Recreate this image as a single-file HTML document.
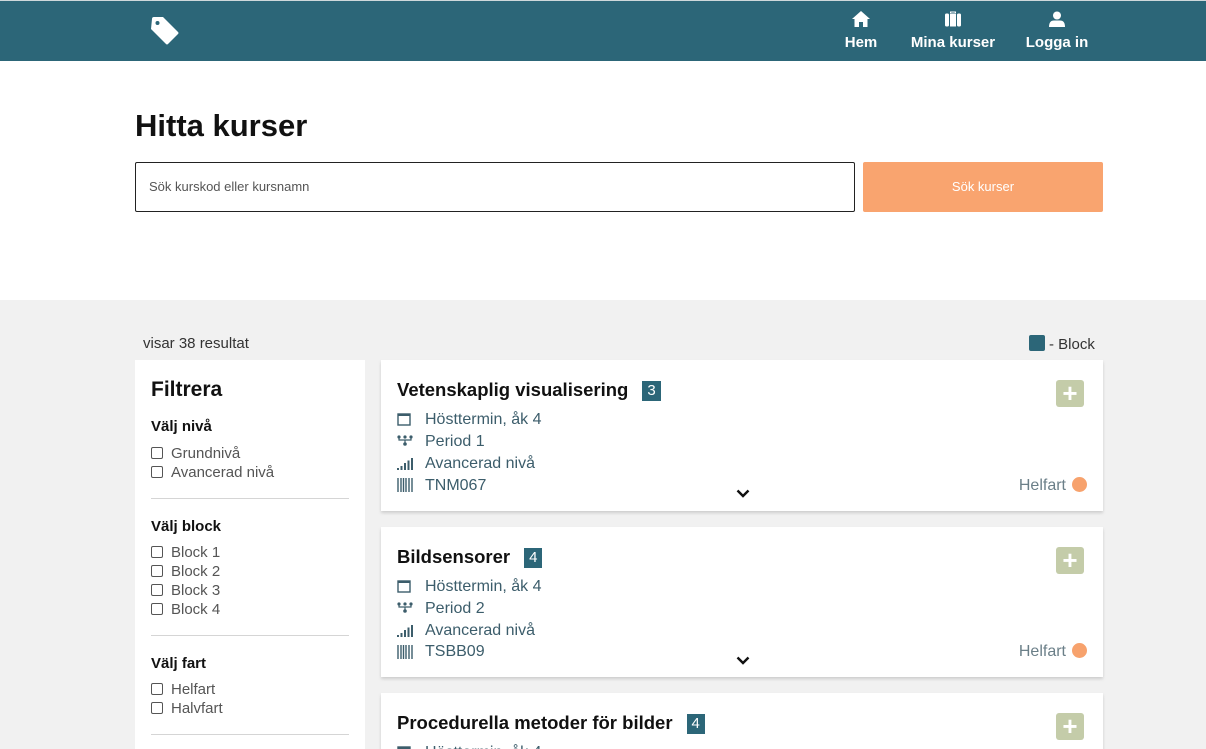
<!DOCTYPE html><html><head><meta charset="utf-8"><style>
*{margin:0;padding:0;box-sizing:border-box}
html,body{width:1206px;height:749px;overflow:hidden}
body{background:#f1f1f1;font-family:"Liberation Sans",sans-serif;position:relative}
.a{position:absolute}
.hdr{left:0;top:0;width:1206px;height:61px;background:#2c6678;border-top:1px solid #cfd8db}
.nav{color:#fff;font-weight:bold;font-size:15px;text-align:center;white-space:nowrap}
.white{left:0;top:61px;width:1206px;height:239px;background:#fff}
h1{font-size:31px;font-weight:bold;color:#111}
.inp{left:135px;top:162px;width:720px;height:50px;border:1px solid #222;border-radius:2px;background:#fff;font-size:13px;color:#555;padding:16px 13px}
.btn{left:863px;top:162px;width:240px;height:50px;background:#f9a46f;color:#fff;font-size:13px;text-align:center;line-height:50px;border-radius:2px}
.side{left:135px;top:360px;width:230px;height:400px;background:#fff}
.card{left:381px;width:722px;background:#fff;box-shadow:0 2px 3px rgba(0,0,0,.15)}
.t{font-size:18.5px;font-weight:bold;color:#111;position:absolute;left:16px;top:19px;white-space:nowrap}
.badge{display:inline-block;background:#2c6678;color:#fff;font-size:15px;font-weight:normal;padding:0 5px;height:20px;line-height:20px;margin-left:14px;vertical-align:1px}
.m{position:absolute;left:44px;font-size:16px;color:#3c5d6b}
.ic{position:absolute;left:16px}
.plus{position:absolute;right:19px;top:20px;width:28px;height:27px;background:#c4cca9;border-radius:3px;color:#fff;font-size:26px;line-height:27px;text-align:center;font-weight:bold}
.hf{position:absolute;right:16px;font-size:16px;color:#6b7f88}
.dot{display:inline-block;width:15px;height:15px;border-radius:50%;background:#f7a26d;margin-left:6px;vertical-align:-2px}
.chev{position:absolute;left:355px}
.fh{font-size:15px;font-weight:bold;color:#111;position:absolute;left:16px}
.cb{position:absolute;left:16px;font-size:15px;color:#555}
.cb i{display:inline-block;width:12px;height:12px;border:1px solid #555;border-radius:2px;margin-right:8px;vertical-align:-1px}
.hr{position:absolute;left:16px;width:198px;height:1px;background:#d5d5d5}
</style></head><body>
<div class="a hdr">
<svg class="a" style="left:150px;top:15px" width="30" height="30" viewBox="0 0 30 30"><path d="M2 3 Q2 1 4 1 L13 1 L28 16 Q29 17 28 18 L18 28 Q17 29 16 28 L1 13 Z" fill="#fff"/><circle cx="7.5" cy="7" r="2" fill="#2c6678"/></svg>
<div class="a nav" style="left:843px;top:10px;width:36px"><svg width="18" height="16" viewBox="0 0 18 16"><path d="M9 0 L18 8 L15.5 8 L15.5 16 L11 16 L11 11 L7 11 L7 16 L2.5 16 L2.5 8 L0 8Z" fill="#fff"/></svg><div style="margin-top:3px">Hem</div></div>
<div class="a nav" style="left:908px;top:10px;width:90px"><svg width="16" height="16" viewBox="0 0 16 16"><path d="M5 2 L5 0.5 L11 0.5 L11 2 L9.8 2 L9.8 1.5 L6.2 1.5 L6.2 2Z" fill="#fff"/><rect x="0" y="2.5" width="4" height="13" rx="1.5" fill="#fff"/><rect x="5" y="2.5" width="6" height="13" fill="#fff"/><rect x="12" y="2.5" width="4" height="13" rx="1.5" fill="#fff"/></svg><div style="margin-top:3px">Mina kurser</div></div>
<div class="a nav" style="left:1022px;top:10px;width:70px"><svg width="16" height="16" viewBox="0 0 16 16"><circle cx="8" cy="4.5" r="4" fill="#fff"/><path d="M0 16 Q0 9.5 5 9.5 L11 9.5 Q16 9.5 16 16Z" fill="#fff"/></svg><div style="margin-top:3px">Logga in</div></div>
</div>
<div class="a white"></div>
<h1 class="a" style="left:135px;top:108px">Hitta kurser</h1>
<div class="a inp">Sök kurskod eller kursnamn</div>
<div class="a btn">Sök kurser</div>
<div class="a" style="left:143px;top:335px;font-size:15px;color:#333">visar 38 resultat</div>
<div class="a" style="left:1029px;top:335px;font-size:15px;color:#333"><span style="display:inline-block;width:16px;height:16px;background:#2c6678;border-radius:2px;vertical-align:-2px;margin-right:4px"></span>- Block</div>
<div class="a side">
<div class="a" style="left:16px;top:18px;font-size:21px;font-weight:bold;color:#111">Filtrera</div>
<div class="fh" style="top:58px">Välj nivå</div>
<div class="cb" style="top:85px"><i></i>Grundnivå</div>
<div class="cb" style="top:104px"><i></i>Avancerad nivå</div>
<div class="hr" style="top:138px"></div>
<div class="fh" style="top:158px">Välj block</div>
<div class="cb" style="top:184px"><i></i>Block 1</div>
<div class="cb" style="top:203px"><i></i>Block 2</div>
<div class="cb" style="top:222px"><i></i>Block 3</div>
<div class="cb" style="top:241px"><i></i>Block 4</div>
<div class="hr" style="top:275px"></div>
<div class="fh" style="top:295px">Välj fart</div>
<div class="cb" style="top:321px"><i></i>Helfart</div>
<div class="cb" style="top:340px"><i></i>Halvfart</div>
<div class="hr" style="top:374px"></div>
</div>

<div class="a card" style="top:360px;height:151px">
<div class="t">Vetenskaplig visualisering<span class="badge">3</span></div>
<div class="plus">+</div>
<svg class="ic" style="top:52px" width="14" height="14"><rect x="1" y="2" width="12" height="11" fill="none" stroke="#3c5d6b" stroke-width="1.4"/><rect x="1" y="2" width="12" height="2" fill="#3c5d6b"/></svg>
<div class="m" style="top:51px">Hösttermin, åk 4</div>
<svg class="ic" style="top:75px" width="16" height="12"><circle cx="2" cy="2" r="1.6" fill="#3c5d6b"/><circle cx="8" cy="2" r="1.6" fill="#3c5d6b"/><circle cx="14" cy="2" r="1.6" fill="#3c5d6b"/><circle cx="8" cy="9" r="1.8" fill="#3c5d6b"/><path d="M2 2V5H14V2M8 5V9" stroke="#3c5d6b" fill="none" stroke-width="1.2"/></svg>
<div class="m" style="top:73px">Period 1</div>
<svg class="ic" style="top:98px" width="16" height="12"><rect x="0" y="10" width="2" height="2" fill="#3c5d6b"/><rect x="3.5" y="8" width="2" height="4" fill="#3c5d6b"/><rect x="7" y="5" width="2" height="7" fill="#3c5d6b"/><rect x="10.5" y="2.5" width="2" height="9.5" fill="#3c5d6b"/><rect x="14" y="0" width="2" height="12" fill="#3c5d6b"/></svg>
<div class="m" style="top:95px">Avancerad nivå</div>
<svg class="ic" style="top:118px" width="16" height="14"><path d="M1 0V14M4 0V14M6.5 0V14M9 0V14M12 0V14M15 0V14" stroke="#3c5d6b" stroke-width="1.4"/></svg>
<div class="m" style="top:117px">TNM067</div>
<svg class="chev" style="top:129px" width="14" height="9"><path d="M1.5 1.5L7 7L12.5 1.5" stroke="#111" stroke-width="2.4" fill="none"/></svg>
<div class="hf" style="top:117px">Helfart<span class="dot"></span></div>
</div>

<div class="a card" style="top:527px;height:150px">
<div class="t">Bildsensorer<span class="badge">4</span></div>
<div class="plus">+</div>
<svg class="ic" style="top:52px" width="14" height="14"><rect x="1" y="2" width="12" height="11" fill="none" stroke="#3c5d6b" stroke-width="1.4"/><rect x="1" y="2" width="12" height="2" fill="#3c5d6b"/></svg>
<div class="m" style="top:51px">Hösttermin, åk 4</div>
<svg class="ic" style="top:75px" width="16" height="12"><circle cx="2" cy="2" r="1.6" fill="#3c5d6b"/><circle cx="8" cy="2" r="1.6" fill="#3c5d6b"/><circle cx="14" cy="2" r="1.6" fill="#3c5d6b"/><circle cx="8" cy="9" r="1.8" fill="#3c5d6b"/><path d="M2 2V5H14V2M8 5V9" stroke="#3c5d6b" fill="none" stroke-width="1.2"/></svg>
<div class="m" style="top:73px">Period 2</div>
<svg class="ic" style="top:98px" width="16" height="12"><rect x="0" y="10" width="2" height="2" fill="#3c5d6b"/><rect x="3.5" y="8" width="2" height="4" fill="#3c5d6b"/><rect x="7" y="5" width="2" height="7" fill="#3c5d6b"/><rect x="10.5" y="2.5" width="2" height="9.5" fill="#3c5d6b"/><rect x="14" y="0" width="2" height="12" fill="#3c5d6b"/></svg>
<div class="m" style="top:95px">Avancerad nivå</div>
<svg class="ic" style="top:118px" width="16" height="14"><path d="M1 0V14M4 0V14M6.5 0V14M9 0V14M12 0V14M15 0V14" stroke="#3c5d6b" stroke-width="1.4"/></svg>
<div class="m" style="top:116px">TSBB09</div>
<svg class="chev" style="top:129px" width="14" height="9"><path d="M1.5 1.5L7 7L12.5 1.5" stroke="#111" stroke-width="2.4" fill="none"/></svg>
<div class="hf" style="top:116px">Helfart<span class="dot"></span></div>
</div>

<div class="a card" style="top:693px;height:80px">
<div class="t">Procedurella metoder för bilder<span class="badge">4</span></div>
<div class="plus">+</div>
<svg class="ic" style="top:52px" width="14" height="14"><rect x="1" y="2" width="12" height="11" fill="none" stroke="#3c5d6b" stroke-width="1.4"/><rect x="1" y="2" width="12" height="2" fill="#3c5d6b"/></svg>
<div class="m" style="top:51px">Hösttermin, åk 4</div>
</div>
</body></html>
